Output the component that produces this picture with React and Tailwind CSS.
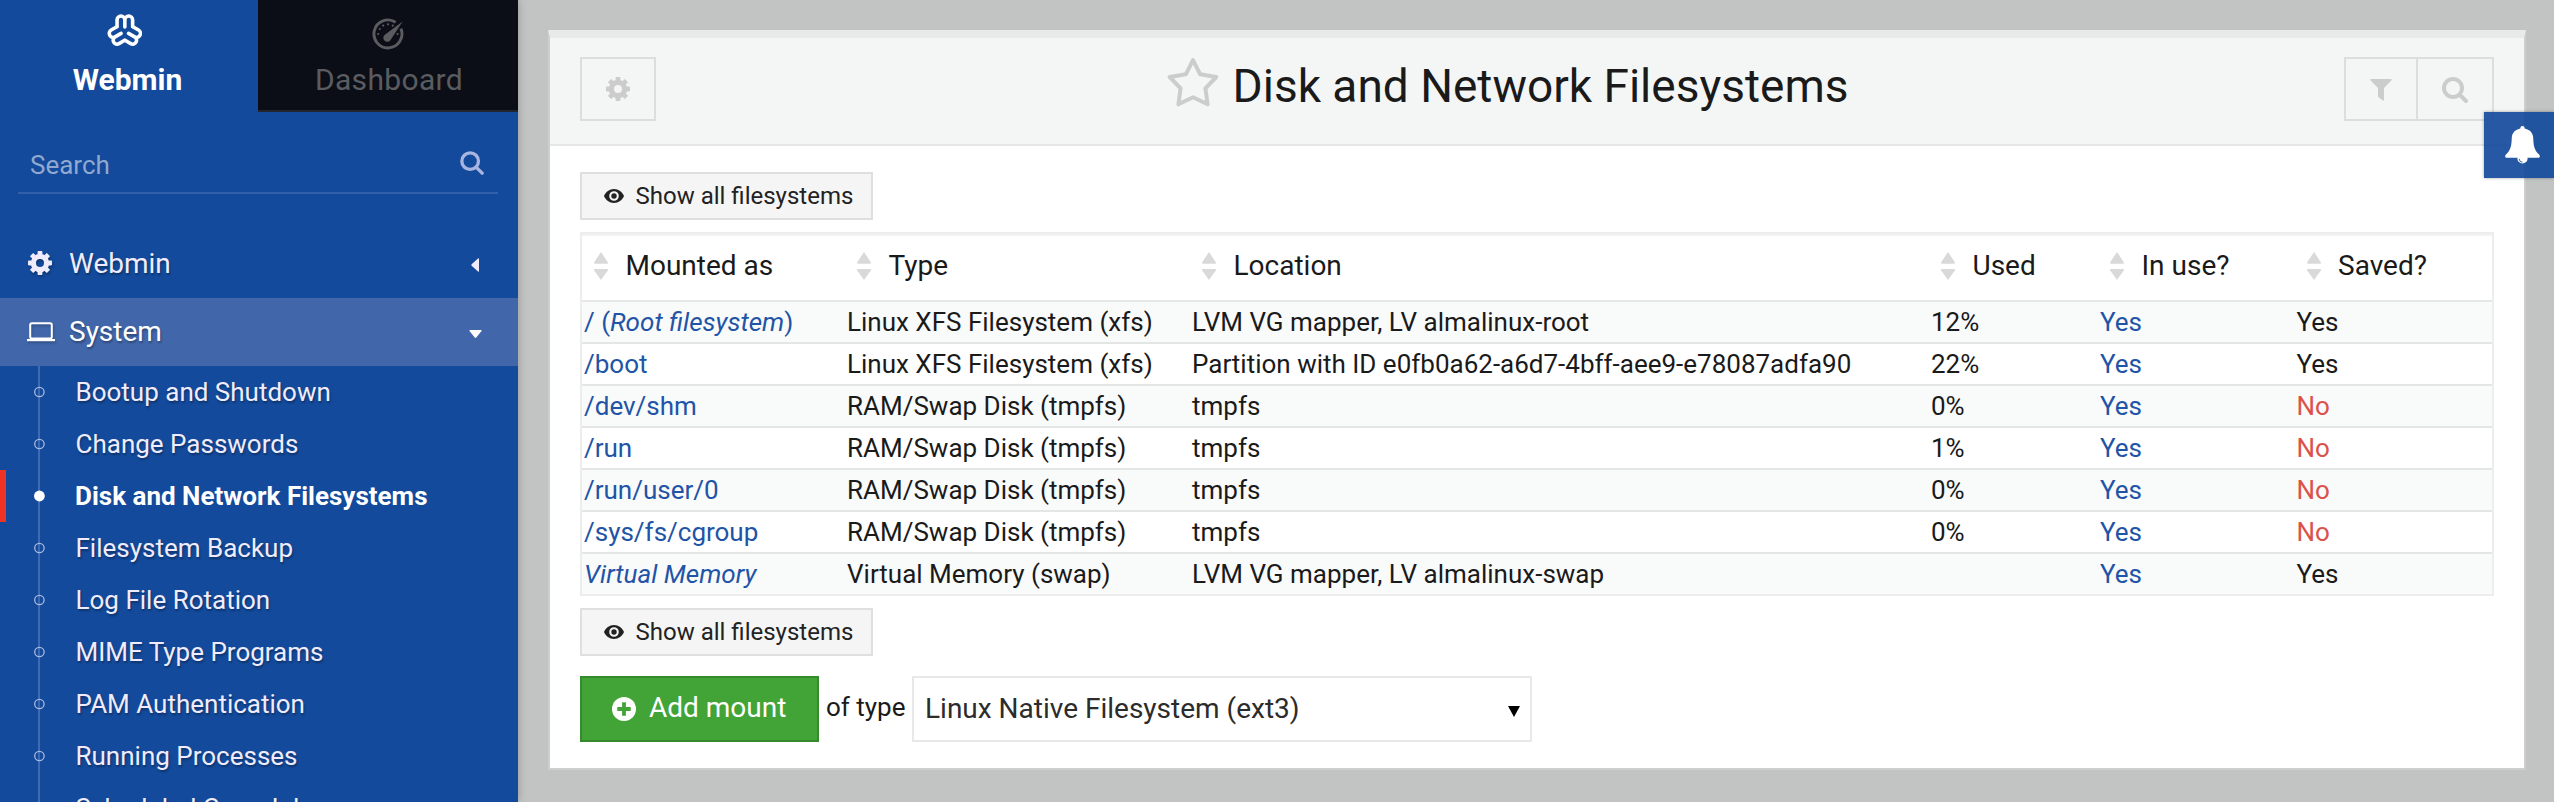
function WebminLogo({ className }) {
  const lobe = "M-8.3-5V-12A4.15 4.15 0 0 1 0-12A4.15 4.15 0 0 1 8.3-12V-5M0-12V-4.6";
  return (
    <svg className={className} viewBox="-19 -18.3 38 36.6" fill="none" stroke="currentColor" strokeWidth="3.8" strokeLinecap="round" strokeLinejoin="round">
      <path d={lobe} />
      <path d={lobe} transform="rotate(120)" />
      <path d={lobe} transform="rotate(240)" />
    </svg>
  );
}

function GaugeIcon({ className }) {
  return (
    <svg className={className} viewBox="0 0 32 32">
      <path d="M28.9 10.6A14 14 0 1 1 23.6 4.2" fill="none" stroke="currentColor" strokeWidth="2.9" />
      <path d="M30.6 3.4L13.2 16.4A4 4 0 1 0 18.9 21.6Z" fill="currentColor" />
      <g fill="currentColor">
        <circle cx="6.2" cy="16" r="1.1" />
        <circle cx="7.8" cy="11" r="1.1" />
        <circle cx="11.2" cy="7.6" r="1.1" />
        <circle cx="16" cy="6.3" r="1.1" />
        <circle cx="20.8" cy="7.6" r="1.1" />
        <circle cx="25.6" cy="16" r="1.1" />
      </g>
    </svg>
  );
}

function CogIcon({ className }) {
  return (
    <svg className={className} viewBox="-12 -12 24 24" fill="none" stroke="currentColor">
      <circle r="6.6" strokeWidth="5.2" />
      {[0, 45, 90, 135, 180, 225, 270, 315].map((a) => (
        <rect key={a} x="-2.4" y="-12" width="4.8" height="4.5" rx="0.8" fill="currentColor" stroke="none" transform={`rotate(${a})`} />
      ))}
    </svg>
  );
}

function SearchIcon({ className, weight }) {
  return (
    <svg className={className} viewBox="0 0 26 26" fill="none" stroke="currentColor" strokeLinecap="round">
      <circle cx="11" cy="11" r="9" strokeWidth={weight} />
      <path d="M18 18L24 24" strokeWidth={weight} />
    </svg>
  );
}

function LaptopIcon({ className }) {
  return (
    <svg className={className} viewBox="0 0 28 20">
      <rect x="3.2" y="1.2" width="21.6" height="15.3" rx="1.8" fill="none" stroke="currentColor" strokeWidth="2" />
      <path d="M0 17H28V19.2H0Z" fill="currentColor" />
    </svg>
  );
}

function EyeIcon({ className }) {
  return (
    <svg className={className} viewBox="0 0 20 14">
      <path fill="currentColor" fillRule="evenodd" d="M10 0C14.600 0 18.300 3 20 7C18.300 11 14.600 14 10 14C5.400 14 1.700 11 0 7C1.700 3 5.400 0 10 0ZM10 2.200A4.800 4.800 0 1 0 10 11.800A4.800 4.800 0 1 0 10 2.200Z" />
      <circle cx="10" cy="7" r="2.700" fill="currentColor" />
    </svg>
  );
}

function StarIcon({ className }) {
  return (
    <svg className={className} viewBox="0 0 52 50" fill="none" stroke="currentColor" strokeWidth="4" strokeLinejoin="round">
      <path d="M26 3.200L33.200 17.300L49.300 20L38.400 31.300L40.600 47.300L26 40.300L11.400 47.300L13.600 31.300L2.700 20L18.800 17.300Z" />
    </svg>
  );
}

function FilterIcon({ className }) {
  return (
    <svg className={className} viewBox="0 0 22 22">
      <path fill="currentColor" d="M0.600 0H21.400Q22 0.700 21.600 1.200L14 9V21.300Q13.700 22 13 21.600L8.400 18.200Q8 17.800 8 17.300V9L0.400 1.200Q0 0.700 0.600 0Z" />
    </svg>
  );
}

function BellIcon({ className }) {
  return (
    <svg className={className} viewBox="0 0 35 38">
      <circle cx="17.500" cy="32.500" r="5.100" fill="currentColor" />
      <path d="M17.500 36.200A3.400 3.400 0 0 1 14.200 32.800" fill="none" stroke="#2a5ba7" strokeWidth="0.900" />
      <path fill="currentColor" d="M17.500 0C18.900 0 19.700 1 19.600 2.400C24.500 3.300 28 6.800 28.200 11.500C28.500 19.500 29 24 34.300 28.800C35.400 30.100 34.800 31.800 33 31.800H2C0.200 31.800 -0.400 30.100 0.700 28.800C6 24 6.500 19.500 6.800 11.500C7 6.800 10.500 3.300 15.400 2.400C15.300 1 16.100 0 17.500 0Z" />
    </svg>
  );
}

function PlusCircleIcon({ className }) {
  return (
    <svg className={className} viewBox="0 0 24 24">
      <circle cx="12" cy="12" r="12" fill="currentColor" />
      <path d="M12 5.300V18.700M5.300 12H18.700" stroke="#42a336" strokeWidth="3.800" />
    </svg>
  );
}

function SortIcon({ className }) {
  return (
    <svg className={className} viewBox="0 0 14 28" fill="currentColor">
      <path d="M7 0L14 10.500Q14 11.800 13 11.800H1Q0 11.800 0 10.500Z" />
      <path d="M7 28L14 18.300Q14 17 13 17H1Q0 17 0 18.300Z" />
    </svg>
  );
}

const modules = [
  "Bootup and Shutdown",
  "Change Passwords",
  "Disk and Network Filesystems",
  "Filesystem Backup",
  "Log File Rotation",
  "MIME Type Programs",
  "PAM Authentication",
  "Running Processes",
  "Scheduled Cron Jobs",
];

const columns = ["Mounted as", "Type", "Location", "Used", "In use?", "Saved?"];

const XFS = "Linux XFS Filesystem (xfs)";
const TMPFS = "RAM/Swap Disk (tmpfs)";

const mounts = [
  { path: <>/ (<i>Root filesystem</i>)</>, type: XFS, location: "LVM VG mapper, LV almalinux-root", used: "12%", saved: true },
  { path: "/boot", type: XFS, location: "Partition with ID e0fb0a62-a6d7-4bff-aee9-e78087adfa90", used: "22%", saved: true },
  { path: "/dev/shm", type: TMPFS, location: "tmpfs", used: "0%", saved: false },
  { path: "/run", type: TMPFS, location: "tmpfs", used: "1%", saved: false },
  { path: "/run/user/0", type: TMPFS, location: "tmpfs", used: "0%", saved: false },
  { path: "/sys/fs/cgroup", type: TMPFS, location: "tmpfs", used: "0%", saved: false },
  { path: <i>Virtual Memory</i>, type: "Virtual Memory (swap)", location: "LVM VG mapper, LV almalinux-swap", used: "", saved: true },
];

const gridCols = "grid grid-cols-[263px_345px_739px_169px_196.5px_1fr]";

function Sidebar() {
  return (
    <aside className="relative z-10 flex h-full w-[518px] shrink-0 flex-col overflow-hidden bg-[#134a9b] shadow-[0_0_8px_rgba(0,0,0,0.25)]">
      <div className="flex h-28 shrink-0 text-[30px] leading-9">
        <div className="flex w-[258px] flex-col items-center pr-[3px] text-white">
          <WebminLogo className="mt-[14px] mr-[6px] h-[34.400px] w-[35.700px]" />
          <span className="mt-[13.500px] font-bold">Webmin</span>
        </div>
        <div className="flex flex-1 flex-col items-center border-b-2 border-[#20252e] bg-[#0b0e17] text-[#5a5c60]">
          <GaugeIcon className="mt-[18px] size-8" />
          <span className="mt-[12px] ml-[2px] tracking-[0.350px]">Dashboard</span>
        </div>
      </div>
      <div className="mr-5 ml-[18px] mt-10 flex h-[42px] shrink-0 items-start justify-between border-b-2 border-[#315fa8] pr-[14px] pl-3 text-[26px] leading-[26px] text-[#91a8d0]">
        <span>Search</span>
        <SearchIcon className="-mt-px size-6 text-[#a7b5e0]" weight="3.600" />
      </div>
      <div className="mt-[34px] flex h-[70px] shrink-0 items-center pr-[39px] pl-[28px] text-[28px] text-[#f0ecfc] text-shadow-[1px_2px_2px_rgba(0,0,0,0.3)]">
        <CogIcon className="size-6 drop-shadow-[1px_2px_1px_rgba(0,0,0,0.25)]" />
        <span className="mt-px ml-[17px]">Webmin</span>
        <svg className="mt-1 ml-auto h-[14px] w-2" viewBox="0 0 8 14" fill="currentColor">
          <path d="M8 1V13Q8 14 7 13.500L0.600 7.800Q0 7 0.600 6.200L7 0.500Q8 0 8 1Z" />
        </svg>
      </div>
      <div className="flex h-[68px] shrink-0 items-center bg-[#4166aa] pr-9 pl-[27px] text-[28px] text-white text-shadow-[1px_2px_2px_rgba(0,0,0,0.3)]">
        <LaptopIcon className="h-5 w-7 drop-shadow-[1px_2px_1px_rgba(0,0,0,0.2)]" />
        <span className="ml-[14px]">System</span>
        <svg className="mt-[3px] ml-auto h-2 w-[13px]" viewBox="0 0 13 8" fill="currentColor">
          <path d="M1 0H12Q13 0 12.500 1L7.300 7.500Q6.500 8.300 5.700 7.500L0.500 1Q0 0 1 0Z" />
        </svg>
      </div>
      <ul className="flex flex-col text-[26px] text-[#f0ecfc]">
        {modules.map((name, i) => {
          const active = i === 2;
          return (
            <li key={name} className={active ? "flex h-[52px] items-center text-white" : "flex h-[52px] items-center text-shadow-[1px_2px_2px_rgba(0,0,0,0.3)]"}>
              <span className={active ? "h-full w-1.5 bg-[#ee3224]" : "h-full w-1.5"} />
              <svg className="ml-7 h-[52px] w-[12px]" viewBox="0 0 12 52">
                <path d="M5 0V52" stroke="#416ab0" strokeWidth="2" />
                <circle cx="5.400" cy="26" r={active ? 5.400 : 4.700} fill={active ? "#fff" : "none"} stroke={active ? "none" : "#a8badb"} strokeWidth="1.300" />
              </svg>
              <span className={active ? "ml-[29px] font-bold" : "ml-[29.500px]"}>{name}</span>
            </li>
          );
        })}
      </ul>
    </aside>
  );
}

function ShowAllButton() {
  return (
    <button className="flex h-12 w-[293px] shrink-0 items-center border-2 border-[#dfdfdf] bg-[#f5f5f5] pl-[22px] text-[24px] text-[#222222]">
      <EyeIcon className="h-[14px] w-5" />
      <span className="ml-[11.500px] whitespace-nowrap">Show all filesystems</span>
    </button>
  );
}

function MountTable() {
  return (
    <div className="my-3 border-2 border-[#ededed]">
      <div className={`${gridCols} h-[68px] border-t-2 border-b-2 border-t-[#f2f2f2] border-b-[#e6e7e7] text-[28px]`}>
        {columns.map((name) => (
          <div key={name} className="flex items-center pl-3 pb-1">
            <SortIcon className="h-7 w-[14px] text-[#d9d9d9]" />
            <span className="mb-px ml-[17.500px]">{name}</span>
          </div>
        ))}
      </div>
      {mounts.map((m, i) => (
        <div
          key={i}
          className={`${gridCols} h-[42px] border-b-2 border-[#e4e5e5] pl-0.5 text-[26px] leading-10 whitespace-nowrap last:h-10 last:border-b-0 odd:bg-white even:bg-[#f9fafa]`}
        >
          <div className="text-[#1f54a6]">{m.path}</div>
          <div>{m.type}</div>
          <div>{m.location}</div>
          <div>{m.used}</div>
          <div className="text-[#1f54a6]">Yes</div>
          {m.saved ? <div>Yes</div> : <div className="text-[#db524b]">No</div>}
        </div>
      ))}
    </div>
  );
}

export default function App() {
  return (
    <div className="relative flex h-[802px] w-[2554px] overflow-hidden bg-[#c2c4c3] font-['Roboto',sans-serif] text-[#1a1a1a]">
      <Sidebar />
      <main className="mt-[30px] ml-[30px] h-[740px] w-[1978px] border-2 border-t-8 border-[#cdcfce] border-t-[#e8e9e9] bg-white">
        <header className="flex h-[108px] items-start justify-between border-b-2 border-[#e5e6e6] bg-[#f4f6f5] px-[30px] pt-[19px] text-[#cccccc]">
          <button className="flex h-16 w-[76px] items-center justify-center border-2 border-[#dcdddd]">
            <CogIcon className="size-6" />
          </button>
          <h1 className="flex items-start pl-[15px] text-[46px] leading-[58px]">
            <StarIcon className="h-[50px] w-[52px]" />
            <span className="ml-[14px] text-[#1a1a1a]">Disk and Network Filesystems</span>
          </h1>
          <div className="flex h-16 w-[150px] border-2 border-[#dcdddd]">
            <div className="flex w-[72px] items-center justify-center border-r-2 border-[#dcdddd]">
              <FilterIcon className="mt-0.5 size-[22px]" />
            </div>
            <div className="flex flex-1 items-center justify-center">
              <SearchIcon className="mt-0.5 size-[26px]" weight="4" />
            </div>
          </div>
        </header>
        <div className="flex flex-col items-start px-[30px] pt-[26px]">
          <ShowAllButton />
          <div className="w-full">
            <MountTable />
          </div>
          <ShowAllButton />
          <div className="mt-5 flex h-[66px] items-center">
            <button className="flex h-[66px] w-[239px] items-center border-2 border-[#37892d] bg-[#42a336] pl-[30px] text-[28px] text-white">
              <PlusCircleIcon className="size-6" />
              <span className="mb-0.5 ml-[13px] whitespace-nowrap">Add mount</span>
            </button>
            <span className="mb-1 ml-[7px] w-[86px] text-[26px]">of type</span>
            <div className="flex h-[66px] w-[620px] items-center justify-between border-2 border-[#e8e8e8] pr-[10px] pl-[11px] text-[28px] text-[#2c2c2c]">
              <span>Linux Native Filesystem (ext3)</span>
              <svg className="mt-[5px] h-[11px] w-3" viewBox="0 0 12 11">
                <path d="M0 0H12L6 11Z" fill="#000" />
              </svg>
            </div>
          </div>
        </div>
      </main>
      <button className="absolute top-28 right-0 flex h-[66px] w-[70px] items-center justify-center bg-[#134a9b]/92 pl-[6px] text-white shadow-[0_0_3px_rgba(0,0,0,0.35)]">
        <BellIcon className="h-[38px] w-[35px]" />
      </button>
    </div>
  );
}
